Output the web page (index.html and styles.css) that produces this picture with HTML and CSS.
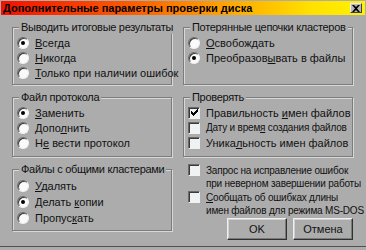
FILE: index.html
```html
<!DOCTYPE html>
<html lang="ru">
<head>
<meta charset="utf-8">
<title>Дополнительные параметры проверки диска</title>
<link rel="stylesheet" href="styles.css">
</head>
<body>
<div class="dialog">
  <div class="titlebar">
    <span class="title">Дополнительные параметры проверки диска</span>
    <span class="close"><svg width="8" height="7" viewBox="0 0 8 7"><path d="M0 0h2l2 2 2-2h2L5 3.5 8 7H6L4 5 2 7H0l3-3.5z" fill="#000"/></svg></span>
  </div>
  <div class="body">
    <div class="col left">
      <div class="group g1">
        <span class="legend">Выводить итоговые результаты</span>
        <div class="opt"><span class="radio on"></span><span><u>В</u>сегда</span></div>
        <div class="opt"><span class="radio"></span><span><u>Н</u>икогда</span></div>
        <div class="opt"><span class="radio"></span><span><u>Т</u>олько при наличии ошибок</span></div>
      </div>
      <div class="group g2">
        <span class="legend">Файл протокола</span>
        <div class="opt"><span class="radio on"></span><span><u>З</u>аменить</span></div>
        <div class="opt"><span class="radio"></span><span>Допо<u>л</u>нить</span></div>
        <div class="opt"><span class="radio"></span><span>Н<u>е</u> вести протокол</span></div>
      </div>
      <div class="group g3">
        <span class="legend">Файлы с общими кластерами</span>
        <div class="opt"><span class="radio"></span><span><u>У</u>далять</span></div>
        <div class="opt"><span class="radio on"></span><span>Делать <u>к</u>опии</span></div>
        <div class="opt"><span class="radio"></span><span>Пропус<u>к</u>ать</span></div>
      </div>
    </div>
    <div class="col right">
      <div class="group g1">
        <span class="legend">Потерянные цепочки кластеров</span>
        <div class="opt"><span class="radio"></span><span><u>О</u>свобождать</span></div>
        <div class="opt"><span class="radio on"></span><span>Преобразов<u>ы</u>вать в файлы</span></div>
      </div>
      <div class="group g4">
        <span class="legend">Проверять</span>
        <div class="opt"><span class="check on"><svg width="7" height="7" viewBox="0 0 7 7"><path d="M0 2h1v1h1v1h1V3h1V2h1V1h1V0h1v3H6v1H5v1H4v1H3v1H2V6H1V5H0z" fill="#000"/></svg></span><span>Правильность <u>и</u>мен файлов</span></div>
        <div class="opt"><span class="check"></span><span class="tight">Дату и врем<u>я</u> создания файлов</span></div>
        <div class="opt"><span class="check"></span><span>Уника<u>л</u>ьность имен файлов</span></div>
      </div>
      <div class="extra">
        <div class="opt multi"><span class="check"></span><span class="tight">Запрос на исправление ошибок<br>при неверном завершении работы</span></div>
        <div class="opt multi"><span class="check"></span><span class="tight"><u>С</u>ообщать об ошибках длины<br>имен файлов для режима MS-DOS</span></div>
      </div>
      <div class="buttons">
        <button class="btn">OK</button>
        <button class="btn">Отмена</button>
      </div>
    </div>
  </div>
</div>
</body>
</html>
```
FILE: styles.css
```css
html, body {
  margin: 0;
  padding: 0;
  background: #acacac;
}
body {
  width: 366px;
  height: 250px;
  overflow: hidden;
  font-family: "Liberation Sans", Arial, sans-serif;
  font-size: 11px;
  color: #111;
}
.dialog {
  width: 366px;
  height: 246px;
  border-bottom: 1px solid #505050;
  box-sizing: border-box;
  background: #acacac;
}
.titlebar {
  height: 14px;
  margin: 1px 1px 0 1px;
  background: linear-gradient(to right, #f41000 0%, #fb5a00 35%, #ffa000 60%, #ffe000 85%, #fff200 100%);
  display: flex;
  align-items: center;
  justify-content: space-between;
  padding: 0 3px 0 2px;
}
.title {
  font-family: "Liberation Sans Narrow", "Liberation Sans", Arial, sans-serif;
  font-weight: bold;
  font-size: 11px;
  color: #000;
  white-space: nowrap;
}
.close {
  width: 12px;
  height: 10px;
  background: #b8b8b8;
  border: 1px solid;
  border-color: #eee #404040 #404040 #eee;
  display: flex;
  align-items: center;
  justify-content: center;
  box-sizing: border-box;
}
.body {
  display: flex;
  gap: 11px;
  padding: 12px 11px 0 12px;
}
.col {
  display: flex;
  flex-direction: column;
  flex: none;
  min-width: 0;
}
.left { width: 160px; }
.right { width: 170px; }
.group {
  position: relative;
  border: 1px solid #7c7c7c;
  box-shadow: inset 1px 1px 0 #d8d8d8, 1px 1px 0 #d8d8d8;
  padding: 7px 0 0 4px;
  box-sizing: border-box;
  margin-bottom: 12px;
}
.g1 { height: 58px; }
.g2 { height: 60px; }
.g3 { height: 62px; }
.g3 .opt:first-of-type { margin-top: 1px; }
.g4 { height: 60px; margin-bottom: 7px; }
.legend {
  position: absolute;
  top: -7px;
  left: 6px;
  background: #acacac;
  padding: 0 2px;
  line-height: 13px;
  white-space: nowrap;
  letter-spacing: -0.3px;
}
.opt {
  display: flex;
  align-items: center;
  gap: 6px;
  height: 15px;
  white-space: nowrap;
}
.g3 .opt { height: 16px; }
.tight {
  font-size: 10px;
  letter-spacing: -0.2px;
}
.radio {
  width: 12px;
  height: 12px;
  border-radius: 50%;
  background: #fafafa;
  box-sizing: border-box;
  border: 1px solid;
  border-color: #6a6a6a #f0f0f0 #f0f0f0 #6a6a6a;
  box-shadow: inset 1px 1px 0 #3a3a3a;
  position: relative;
  flex: none;
}
.radio.on::after {
  content: "";
  position: absolute;
  left: 3px;
  top: 3px;
  width: 4px;
  height: 4px;
  border-radius: 50%;
  background: #000;
}
.check {
  width: 12px;
  height: 12px;
  background: #eef2f2;
  box-sizing: border-box;
  border: 1px solid;
  border-color: #6a6a6a #f0f0f0 #f0f0f0 #6a6a6a;
  box-shadow: inset 1px 1px 0 #3a3a3a;
  display: flex;
  align-items: center;
  justify-content: center;
  flex: none;
}
.extra {
  padding-left: 5px;
}
.opt.multi {
  align-items: flex-start;
  height: auto;
  line-height: 13px;
  margin-bottom: 1px;
}
.buttons {
  display: flex;
  justify-content: flex-end;
  gap: 6px;
  margin-top: 0;
}
.btn {
  font-family: "Liberation Sans", Arial, sans-serif;
  font-size: 11px;
  color: #111;
  background: #acacac;
  width: 60px;
  height: 22px;
  border: 1px solid;
  border-color: #f0f0f0 #303030 #303030 #f0f0f0;
  box-shadow: inset -1px -1px 0 #7a7a7a, inset 1px 1px 0 #d0d0d0;
  padding: 0;
}
```
